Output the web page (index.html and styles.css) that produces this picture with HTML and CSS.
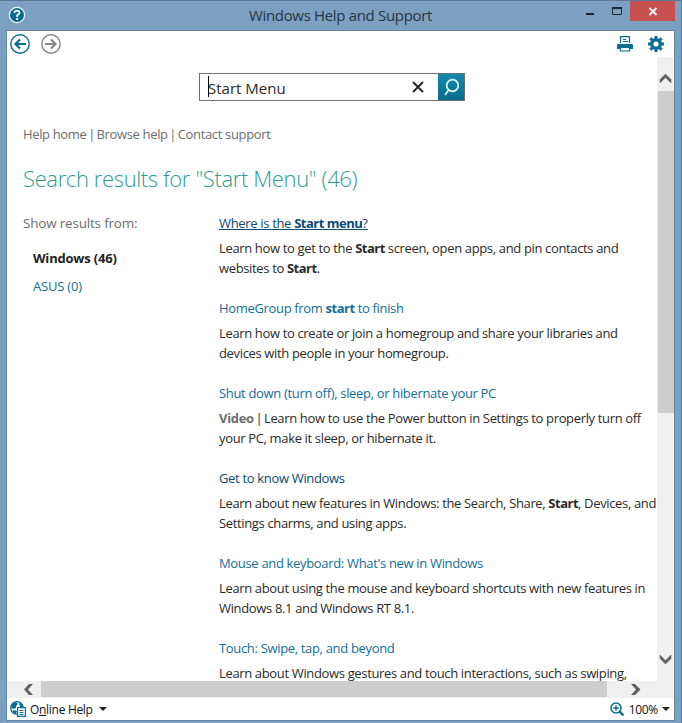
FILE: index.html
```html
<!DOCTYPE html>
<html lang="en">
<head>
<meta charset="utf-8">
<title>Windows Help and Support</title>
<link rel="stylesheet" href="styles.css">
</head>
<body>
<div class="window">
  <header class="titlebar">
    <svg class="app-icon" width="18" height="18" viewBox="0 0 18 18"><circle cx="9" cy="9" r="7.6" fill="#066b8c" stroke="#f4fafc" stroke-width="1.2"/><path d="M6.3 6.8Q6.5 4.7 9 4.7Q11.6 4.8 11.5 6.8Q11.4 8.1 9.2 9.3V11" fill="none" stroke="#fff" stroke-width="1.8"/><path d="M8.1 12h2v2h-2z" fill="#fff"/></svg>
    <h1 class="title">Windows Help and Support</h1>
    <div class="controls">
      <svg width="60" height="21" viewBox="0 0 60 21"><path d="M16 12h8v2h-8z" fill="#182731"/><path d="M42.5 7v6.5h9V7z" fill="none" stroke="#182731"/><path d="M42 6h10v2H42z" fill="#182731"/></svg>
      <div class="close"><svg width="45" height="21" viewBox="0 0 45 21"><path d="M19.5 8l7 7M26.5 8l-7 7" stroke="#fff" stroke-width="1.8"/></svg></div>
    </div>
  </header>
  <main class="client">
    <nav class="toolbar">
      <svg width="20" height="20" viewBox="0 0 20 20" fill="none" stroke="#086f91"><circle cx="10" cy="10" r="9.2" stroke-width="1.4"/><path d="M16 10H5.5M10 5.5L5.5 10l4.5 4.5" stroke-width="2.2"/></svg>
      <svg class="forward" width="20" height="20" viewBox="0 0 20 20" fill="none" stroke="#858585"><circle cx="10" cy="10" r="9.2" stroke-width="1.4"/><path d="M4 10h10.5M10 5.5l4.5 4.5-4.5 4.5" stroke-width="2.2"/></svg>
      <svg class="printer" width="16" height="16" viewBox="0 0 16 16"><path d="M3.5 7V.7h9V7" fill="none" stroke="#086f91" stroke-width="1.3"/><path d="M6 3.5h3M6 5.5h5" stroke="#086f91"/><path d="M1.3 8h13.4Q16 8 16 9.3V13h-3v-2H3v2H0V9.3Q0 8 1.3 8z" fill="#086f91"/><path d="M3.5 11.5h9v3.500h-9z" fill="#fff" stroke="#086f91" stroke-width="1.2"/></svg>
      <svg class="gear" width="16" height="16" viewBox="0 0 16 16"><g fill="none" stroke="#086f91"><circle cx="8" cy="8" r="4.3" stroke-width="3.4"/><path stroke-width="3" d="M8 0v3M8 13v3M0 8h3M13 8h3M2.3 2.3l2 2M11.7 11.7l2 2M2.3 13.7l2-2M11.7 4.3l2-2"/></g></svg>
    </nav>
    <div class="viewport">
      <div class="page">
        <div class="search">
          <span class="caret"></span><span class="query">Start Menu</span>
          <svg class="clear" width="12" height="12" viewBox="0 0 12 12"><path d="M1 1l10 10M11 1L1 11" stroke="#222" stroke-width="1.9"/></svg>
          <div class="go"><svg width="26" height="26" viewBox="0 0 26 26"><g fill="none" stroke="#e3f8fd" stroke-width="1.7"><circle cx="14.5" cy="11.5" r="5.8"/><path d="M10.6 16L7 21"/></g></svg></div>
        </div>
        <p class="links">Help home <span class="bar">|</span> Browse help <span class="bar">|</span> Contact support</p>
        <h2 class="heading">Search results for "Start Menu" (46)</h2>
        <div class="columns">
          <aside class="sources">
            <p class="from">Show results from:</p>
            <p class="source current">Windows (46)</p>
            <p class="source">ASUS (0)</p>
          </aside>
          <section class="results">
            <article><h3 class="visited focused">Where is the <b>Start menu</b>?</h3><p>Learn how to get to the <b>Start</b> screen, open apps, and pin contacts and<br>websites to <b>Start</b>.</p></article>
            <article><h3>HomeGroup from <b>start</b> to finish</h3><p>Learn how to create or join a homegroup and share your libraries and<br>devices with people in your homegroup.</p></article>
            <article><h3>Shut down (turn off), sleep, or hibernate your PC</h3><p><b class="kind">Video</b> <span class="bar">|</span> Learn how to use the Power button in Settings to properly turn off<br>your PC, make it sleep, or hibernate it.</p></article>
            <article><h3 class="visited">Get to know Windows</h3><p>Learn about new features in Windows: the Search, Share, <b>Start</b>, Devices, and<br>Settings charms, and using apps.</p></article>
            <article><h3>Mouse and keyboard: What's new in Windows</h3><p>Learn about using the mouse and keyboard shortcuts with new features in<br>Windows 8.1 and Windows RT 8.1.</p></article>
            <article><h3>Touch: Swipe, tap, and beyond</h3><p>Learn about Windows gestures and touch interactions, such as swiping,</p></article>
          </section>
        </div>
      </div>
      <div class="vscroll">
        <svg width="17" height="34" viewBox="0 0 17 34"><path d="M3 22.5L8.5 17l5.500 5.500V26L8.500 20.500 3 26z" fill="#606060" stroke="#606060" stroke-width=".5"/></svg>
        <div class="vthumb"></div>
        <svg class="down" width="17" height="34" viewBox="0 0 17 34"><path d="M3 8l5.500 5.500L14 8v3.500L8.500 17 3 11.500z" fill="#606060" stroke="#606060" stroke-width=".5"/></svg>
      </div>
    </div>
    <div class="hscroll">
      <svg width="34" height="17" viewBox="0 0 34 17"><path d="M22 3l-5 5.500 5 5.500h4l-5-5.500L26 3z" fill="#606060"/></svg>
      <div class="hthumb"></div>
      <svg width="67" height="17" viewBox="0 0 67 17"><path d="M24 3l5 5.500-5 5.500h4l5.500-5.500L28 3z" fill="#606060"/></svg>
    </div>
    <footer class="status">
      <svg width="16" height="16" viewBox="0 0 16 16"><circle cx="7" cy="7" r="6.300" fill="#fff" stroke="#086f91" stroke-width="1.300"/><path d="M2 3l4-2 2 2-2 2v2L3 8 1 6zM9 2l3 1 1 4-3-1zM3 9l4 1-1 3-3-2z" fill="#086f91"/><path d="M7.600 6.600h7.800v8.800H7.600z" fill="#fff" stroke="#086f91" stroke-width="1.200"/><path d="M9.500 9.500h4M9.500 11.500h4M9.500 13.500h4" stroke="#086f91"/></svg>
      <span class="online">O<u>n</u>line Help</span><i class="tri"></i>
      <svg class="zoom" width="15" height="15" viewBox="0 0 15 15"><g fill="none" stroke="#086f91"><circle cx="6" cy="6" r="5" stroke-width="1.600"/><path d="M9.600 9.600L13.500 13.500" stroke-width="2.400"/><path d="M3.300 6h5.400M6 3.300v5.400" stroke-width="1.400"/></g></svg>
      <span class="percent">100%</span><i class="tri"></i>
    </footer>
  </main>
</div>
</body>
</html>
```
FILE: styles.css
```css
* { box-sizing: border-box; }
body { margin: 0; font-family: "Open Sans", "Noto Sans", sans-serif; font-size: 13px; color: #2a2a2a; }
h1, h2, h3, p { margin: 0; font-weight: 400; white-space: nowrap; }
svg { display: block; flex: none; }
.window { width: 682px; height: 723px; background: #7ca0c2; border-top: 1px solid #587896; border-right: 1px solid #587896; padding: 0 6px 2px; display: flex; flex-direction: column; overflow: hidden; }
.titlebar { height: 29px; display: grid; grid-template-columns: 105px 1fr 105px; align-items: start; flex: none; }
.app-icon { margin: 5px 0 0 2px; }
.title { font-size: 15px; line-height: 29px; text-align: center; color: #263543; letter-spacing: -0.33px; }
.controls { display: flex; justify-content: flex-end; }
.close { width: 45px; height: 20px; background: #c75050; }
.close svg { margin-top: -1px; }
.client { flex: 1; min-height: 0; background: #fff; border: 1px solid #66859f; display: flex; flex-direction: column; }
.toolbar { height: 26px; flex: none; display: flex; align-items: center; padding: 0 10px 0 3px; }
.forward { margin-left: 11px; }
.printer { margin-left: auto; }
.gear { margin-left: 15px; }
.viewport { flex: 1; min-height: 0; display: flex; }
.page { flex: 1; min-width: 0; overflow: hidden; padding: 16px 0 0 16px; }
.search { width: 266px; height: 28px; margin-left: 176px; border: 1px solid #707070; display: flex; align-items: center; }
.caret { width: 1px; height: 21px; background: #000; margin-left: 8px; margin-top: -2px; }
.query { font-size: 15px; line-height: 26px; padding-top: 1px; margin-left: -1px; }
.clear { margin-left: auto; margin-right: 14px; }
.go { width: 26px; height: 26px; background: linear-gradient(#158aac, #086c8c); }
.links { margin-top: 23px; line-height: 20px; color: #6d6d6d; letter-spacing: -0.35px; }
.bar { margin: 0 -1.4px; }
.heading { margin-top: 17px; font-size: 22px; line-height: 34px; font-weight: 300; color: #2d9c8e; letter-spacing: -0.37px; }
.columns { display: grid; grid-template-columns: 196px 1fr; margin-top: 18px; }
.from { font-size: 13.5px; line-height: 20px; color: #6d6d6d; letter-spacing: -0.2px; }
.source { margin: 15px 0 0 10px; line-height: 20px; color: #126e99; letter-spacing: -0.2px; }
.source + .source { margin-top: 8px; }
.source.current { color: #222; font-weight: 700; }
.results { display: flex; flex-direction: column; gap: 20px; }
.results h3 { font-size: 13px; line-height: 20px; color: #126e99; margin-bottom: 5px; letter-spacing: -0.33px; }
.results h3.visited { color: #0a4a75; }
.results h3.focused { text-decoration: underline; }
.results p { line-height: 20px; letter-spacing: -0.35px; }
.results b { letter-spacing: -0.5px; }
.results .kind { color: #6d6d6d; letter-spacing: -0.3px; }
.vscroll { width: 17px; background: #f0f0f0; display: flex; flex-direction: column; }
.vthumb { height: 322px; margin-left: 1px; background: #cdcdcd; }
.down { margin-top: auto; }
.hscroll { height: 17px; flex: none; display: flex; background: #f0f0f0; }
.hthumb { flex: 1; margin-bottom: 1px; background: #cdcdcd; }
.status { height: 22px; flex: none; display: flex; align-items: center; padding: 0 4px 0 3px; font-size: 12px; color: #111; }
.online { margin-left: 4px; letter-spacing: -0.3px; }
.tri { border: 4px solid transparent; border-top-color: #222; border-bottom: 0; margin-left: 6px; }
.zoom { margin-left: auto; }
.percent { margin-left: 4px; letter-spacing: -0.3px; }
.percent + .tri { margin-left: 4px; }
```
